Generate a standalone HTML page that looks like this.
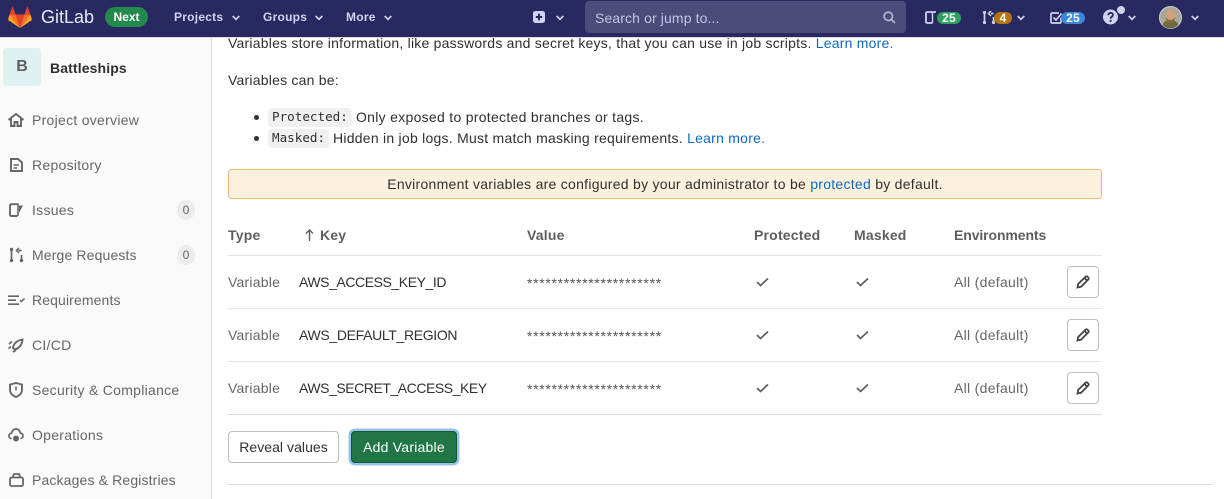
<!DOCTYPE html>
<html><head><meta charset="utf-8">
<style>
*{box-sizing:border-box}
html,body{margin:0;padding:0;width:1224px;height:499px;overflow:hidden;background:#fff;font-family:"Liberation Sans",sans-serif;color:#303030}
.a{position:absolute;white-space:nowrap}
#nav{left:0;top:0;width:1224px;height:37px;background:#292961}
#side{left:0;top:37px;width:212px;height:462px;background:#fafafa;border-right:1px solid #dbdbdb;border-top:1px solid #dbdbdb}
.nl{font-size:12px;font-weight:700;color:#d1d1f0;top:10px;letter-spacing:.25px}
.si{font-size:14px;color:#666;left:32px;letter-spacing:.28px;line-height:18px}
.t{font-size:14px;line-height:18px;letter-spacing:.22px}
.g{color:#666}
.h{font-size:14px;font-weight:700;color:#5e5e5e;letter-spacing:.2px;top:226px;line-height:18px}
.hr{left:228px;width:874px;height:1px;background:#e5e5e5}
.code{font-family:"DejaVu Sans Mono","Liberation Mono",monospace;font-size:12.6px;background:#f0f0f0;border-radius:4px;padding:0 4px;color:#303030;height:19px;line-height:18px}
.b{color:#1068bf}
.edit{left:1067px;width:32px;height:32px;border:1px solid #bfbfbf;border-radius:4px;background:#fff}
.pill{height:12px;border-radius:6px;color:#fff;font-size:12px;font-weight:700;text-align:center;line-height:12px;top:12px;letter-spacing:.2px}
.cnt{left:177px;width:18px;height:20px;border-radius:10px;background:#ececec;color:#666;font-size:12px;line-height:20px;text-align:center}
.st{left:527px;font-size:14px;line-height:18px;letter-spacing:.68px;color:#555}
.k{left:299px;letter-spacing:-.43px}
svg{position:absolute;overflow:visible}
</style></head><body>

<div class="a" id="nav"></div>
<svg style="left:8px;top:7px" width="24" height="22" viewBox="0 0 24 22">
<path d="M12 21 L16.4 7.5 H7.6Z" fill="#e24329"/><path d="M12 21 L7.6 7.5 H1.6Z" fill="#fc6d26"/><path d="M1.6 7.5 L0.2 12 Q0 13 .9 13.6 L12 21Z" fill="#fca326"/><path d="M1.6 7.5H7.6L5 .0Q4.6-.6 4.2 0Z" fill="#e24329"/><path d="M12 21 L16.4 7.5 H22.4Z" fill="#fc6d26"/><path d="M22.4 7.5 L23.8 12 Q24 13 23.1 13.6 L12 21Z" fill="#fca326"/><path d="M22.4 7.5H16.4L19 .0Q19.4-.6 19.8 0Z" fill="#e24329"/>
</svg>
<div class="a" style="left:41px;top:5px;font-size:18px;line-height:24px;color:#e8e8f4">GitLab</div>
<div class="a" style="left:105px;top:7px;width:43px;height:20px;border-radius:10px;background:#218a4c;color:#fff;font-size:12px;font-weight:700;text-align:center;line-height:20px">Next</div>
<div class="a nl" style="left:174px">Projects</div>
<div class="a nl" style="left:263px">Groups</div>
<div class="a nl" style="left:346px">More</div>
<svg style="left:232px;top:15px" width="8" height="6"><path d="M.7 1 4 4.3 7.3 1" fill="none" stroke="#d1d1f0" stroke-width="1.7"/></svg>
<svg style="left:315px;top:15px" width="8" height="6"><path d="M.7 1 4 4.3 7.3 1" fill="none" stroke="#d1d1f0" stroke-width="1.7"/></svg>
<svg style="left:384px;top:15px" width="8" height="6"><path d="M.7 1 4 4.3 7.3 1" fill="none" stroke="#d1d1f0" stroke-width="1.7"/></svg>
<svg style="left:533px;top:11px" width="12" height="12"><rect width="12" height="12" rx="2.5" fill="#d1d1f0"/><path d="M6 2.8V9.2M2.8 6H9.2" stroke="#292961" stroke-width="2"/></svg>
<svg style="left:556px;top:15px" width="8" height="6"><path d="M.7 1 4 4.3 7.3 1" fill="none" stroke="#d1d1f0" stroke-width="1.7"/></svg>
<div class="a" style="left:585px;top:1px;width:321px;height:32px;background:#4b4b7c;border-radius:4px"></div>
<div class="a" style="left:595px;top:9px;font-size:14px;line-height:18px;color:#c4c4de;letter-spacing:.12px">Search or jump to...</div>
<svg style="left:883px;top:11px" width="13" height="13"><circle cx="5.3" cy="5.3" r="4.2" fill="none" stroke="#b5b5d2" stroke-width="1.7"/><path d="M8.5 8.5 12 12" stroke="#b5b5d2" stroke-width="1.8"/></svg>

<svg style="left:925px;top:11px" width="13" height="13"><path d="M11 1H2.5Q1 1 1 2.5V10.5Q1 12 2.5 12H7.5" fill="none" stroke="#d1d1f0" stroke-width="1.8"/><path d="M7.5 1V12" stroke="#d1d1f0" stroke-width="1.4"/></svg>
<div class="a pill" style="left:937px;width:24px;background:#2da160">25</div>
<svg style="left:982px;top:10px" width="14" height="15"><path d="M2.5 3V12M11.5 7V12M11.5 3.5H9" fill="none" stroke="#d1d1f0" stroke-width="1.7"/><circle cx="2.5" cy="2.5" r="1.6" fill="#d1d1f0"/><circle cx="2.5" cy="12.5" r="1.6" fill="#d1d1f0"/><circle cx="11.5" cy="12.5" r="1.6" fill="#d1d1f0"/><path d="M9 1 6.5 3.5 9 6" fill="none" stroke="#d1d1f0" stroke-width="1.5"/></svg>
<div class="a pill" style="left:994px;width:18px;background:#b5720d">4</div>
<svg style="left:1017px;top:15px" width="8" height="6"><path d="M.7 1 4 4.3 7.3 1" fill="none" stroke="#d1d1f0" stroke-width="1.7"/></svg>
<svg style="left:1050px;top:11px" width="14" height="14"><path d="M11 6.5V11Q11 12 10 12H2Q1 12 1 11V3Q1 2 2 2H9" fill="none" stroke="#d1d1f0" stroke-width="1.7"/><path d="M3.5 6.5 6 9 11.5 2.5" fill="none" stroke="#d1d1f0" stroke-width="1.7"/></svg>
<div class="a pill" style="left:1061px;width:24px;background:#3a87d9">25</div>
<svg style="left:1103px;top:9px" width="16" height="16"><circle cx="7.5" cy="8" r="7.5" fill="#d1d1f0"/><path d="M5.2 6.2Q5.5 3.9 7.7 3.9 10 4 9.9 6 9.8 7.2 8.6 7.8 7.6 8.4 7.6 9.6" fill="none" stroke="#292961" stroke-width="1.8"/><circle cx="7.6" cy="11.9" r="1.1" fill="#292961"/></svg>
<div class="a" style="left:1117px;top:6px;width:8px;height:8px;border-radius:50%;background:#d1d1f0;box-shadow:0 0 0 1px #292961"></div>
<svg style="left:1128px;top:15px" width="8" height="6"><path d="M.7 1 4 4.3 7.3 1" fill="none" stroke="#d1d1f0" stroke-width="1.7"/></svg>
<svg style="left:1159px;top:6px" width="23" height="23" viewBox="0 0 23 23"><circle cx="11.5" cy="11.5" r="11" fill="#a8a898" stroke="#cfcfd8" stroke-width="1"/><ellipse cx="11.5" cy="9.5" rx="5" ry="6" fill="#d2a07a"/><path d="M6.5 11Q11.5 17 16.5 11 16 16 11.5 16.5 7 16 6.5 11Z" fill="#8a6b48"/><path d="M3.6 19Q5 15 8 15 11.5 18 15 15 18 15 19.4 19 15 22.5 11.5 22.5 7 22.5 3.6 19Z" fill="#6f6a3c"/></svg>
<svg style="left:1191px;top:15px" width="8" height="6"><path d="M.7 1 4 4.3 7.3 1" fill="none" stroke="#d1d1f0" stroke-width="1.7"/></svg>

<div class="a" id="side"></div>
<div class="a" style="left:3px;top:48px;width:38px;height:38px;border-radius:4px;background:#e0f1f2;color:#5e5e5e;font-size:16px;font-weight:700;text-align:center;line-height:38px">B</div>
<div class="a" style="left:50px;top:59px;font-size:14px;font-weight:700;line-height:18px;color:#303030;letter-spacing:.12px">Battleships</div>

<svg style="left:8px;top:113px" width="16" height="14" fill="none" stroke="#666" stroke-width="1.9"><path d="M.5 7 8 1 15.5 7"/><path d="M3 5.5V13H6.5V9H9.5V13H13V5.5"/></svg>
<div class="a si" style="top:111px">Project overview</div>
<svg style="left:10px;top:158px" width="13" height="14" fill="none" stroke="#666" stroke-width="1.9"><path d="M1 1H8L12 4.5V13H1Z"/><path d="M3.5 7H9M3.5 10H7" stroke-width="1.4"/></svg>
<div class="a si" style="top:156px">Repository</div>
<svg style="left:9px;top:203px" width="15" height="14"><path d="M9.5 1.2H2.5Q1 1.2 1 2.7V11.5Q1 13 2.5 13H8.5" fill="none" stroke="#666" stroke-width="1.9"/><path d="M9 1V13" stroke="#666" stroke-width="1.6"/><path d="M10 2.5H14L10 10Z" fill="#666"/></svg>
<div class="a si" style="top:201px">Issues</div>
<div class="a cnt" style="top:200px">0</div>
<svg style="left:9px;top:247px" width="15" height="16"><path d="M2.5 3V13M12.5 8V13M12.5 3.5H9.5" fill="none" stroke="#666" stroke-width="1.7"/><circle cx="2.5" cy="2.5" r="1.7" fill="#666"/><circle cx="2.5" cy="13.5" r="1.7" fill="#666"/><circle cx="12.5" cy="13.5" r="1.7" fill="#666"/><path d="M10 1 7.5 3.5 10 6" fill="none" stroke="#666" stroke-width="1.5"/></svg>
<div class="a si" style="top:246px;letter-spacing:.14px">Merge Requests</div>
<div class="a cnt" style="top:245px">0</div>
<svg style="left:8px;top:295px" width="17" height="11" fill="none" stroke="#666"><path d="M0 1.2H11M0 5.2H8M0 9.2H11" stroke-width="1.7"/><path d="M12 5 13.5 6.6 16.5 3.4" stroke-width="1.4"/></svg>
<div class="a si" style="top:291px;letter-spacing:.12px">Requirements</div>
<svg style="left:8px;top:338px" width="16" height="15" fill="none" stroke="#666"><path d="M5 10Q6 3 14.5 1.5 14 9 7 11.5Z" stroke-width="1.9"/><path d="M1 6 4 3.5M.5 10.5 3 8.5M5 14 8 12" stroke-width="1.7"/></svg>
<div class="a si" style="top:336px">CI/CD</div>
<svg style="left:9px;top:382px" width="14" height="16" fill="none" stroke="#666" stroke-width="1.9"><path d="M7 1 13 2.6V8Q13 12.5 7 15 1 12.5 1 8V2.6Z"/><path d="M7 4.5V8.5" stroke-width="1.6"/></svg>
<div class="a si" style="top:381px">Security &amp; Compliance</div>
<svg style="left:8px;top:428px" width="16" height="15" fill="none" stroke="#666" stroke-width="1.7"><path d="M3.5 10.5H3Q.8 10 1 7.5 1.2 5.5 3.5 5.2 4.5 1 8 1 11.5 1 12.5 5.2 15 5.5 15 8 15 10 12.5 10.5"/><circle cx="8" cy="10.5" r="2.4" fill="#666" stroke-width="1.2"/></svg>
<div class="a si" style="top:426px">Operations</div>
<svg style="left:9px;top:473px" width="15" height="14" fill="none" stroke="#666" stroke-width="1.8"><rect x="1" y="4.5" width="13" height="8.5" rx="1.5"/><path d="M3.5 4.5 5 1H10L11.5 4.5"/></svg>
<div class="a si" style="top:471px;letter-spacing:.14px">Packages &amp; Registries</div>

<div class="a t" style="left:228px;top:34px">Variables store information, like passwords and secret keys, that you can use in job scripts. <span class="b">Learn more.</span></div>
<div class="a" style="left:212px;top:37px;width:1012px;height:1px;background:#dbdbdb"></div>
<div class="a t" style="left:228px;top:71px">Variables can be:</div>
<div class="a" style="left:254px;top:115px;width:5px;height:5px;border-radius:50%;background:#303030"></div>
<div class="a" style="left:254px;top:136px;width:5px;height:5px;border-radius:50%;background:#303030"></div>
<div class="a code" style="left:268px;top:108px">Protected:</div>
<div class="a t" style="left:356px;top:108px;letter-spacing:.29px">Only exposed to protected branches or tags.</div>
<div class="a code" style="left:268px;top:129px">Masked:</div>
<div class="a t" style="left:333px;top:129px;letter-spacing:.25px">Hidden in job logs. Must match masking requirements. <span class="b">Learn more.</span></div>

<div class="a t" style="left:228px;top:169px;width:874px;height:30px;background:#fdf1dd;border:1px solid #e9be74;border-radius:3px;text-align:center;line-height:28px;letter-spacing:.27px">Environment variables are configured by your administrator to be <span class="b">protected</span> by default.</div>

<div class="a h" style="left:228px">Type</div>
<svg style="left:305px;top:229px" width="9" height="12" fill="none" stroke="#5e5e5e" stroke-width="1.4"><path d="M4.5 12V1M1 4.5 4.5 1 8 4.5"/></svg>
<div class="a h" style="left:320px">Key</div>
<div class="a h" style="left:527px">Value</div>
<div class="a h" style="left:754px">Protected</div>
<div class="a h" style="left:854px">Masked</div>
<div class="a h" style="left:954px;letter-spacing:-.1px">Environments</div>
<div class="a hr" style="top:255px"></div>
<div class="a hr" style="top:308px"></div>
<div class="a hr" style="top:361px"></div>
<div class="a hr" style="top:414px;background:#dbdbdb"></div>
<div class="a hr" style="top:484px;left:228px;width:984px;background:#dbdbdb"></div>

<div class="a t g" style="left:228px;top:273px">Variable</div>
<div class="a t k" style="top:273px">AWS_ACCESS_KEY_ID</div>
<div class="a st" style="top:274px">**********************</div>
<svg style="left:756px;top:277px" width="13" height="10" fill="none" stroke="#5e5e5e" stroke-width="1.7"><path d="M1 5 4.5 8.5 12 1.5"/></svg>
<svg style="left:856px;top:277px" width="13" height="10" fill="none" stroke="#5e5e5e" stroke-width="1.7"><path d="M1 5 4.5 8.5 12 1.5"/></svg>
<div class="a t g" style="left:954px;top:273px;letter-spacing:.3px">All (default)</div>
<div class="a edit" style="top:266px"></div>
<svg style="left:1076px;top:275px" width="14" height="14" fill="none" stroke="#444" stroke-width="1.8"><path d="M1.5 12.5 2.2 9 9.8 1.5Q10.5 1 11.2 1.5L12.5 2.8Q13 3.5 12.5 4.2L5 11.8Z"/><path d="M8.5 3 11 5.5"/></svg>

<div class="a t g" style="left:228px;top:326px">Variable</div>
<div class="a t k" style="top:326px;letter-spacing:-.33px">AWS_DEFAULT_REGION</div>
<div class="a st" style="top:327px">**********************</div>
<svg style="left:756px;top:330px" width="13" height="10" fill="none" stroke="#5e5e5e" stroke-width="1.7"><path d="M1 5 4.5 8.5 12 1.5"/></svg>
<svg style="left:856px;top:330px" width="13" height="10" fill="none" stroke="#5e5e5e" stroke-width="1.7"><path d="M1 5 4.5 8.5 12 1.5"/></svg>
<div class="a t g" style="left:954px;top:326px;letter-spacing:.3px">All (default)</div>
<div class="a edit" style="top:319px"></div>
<svg style="left:1076px;top:328px" width="14" height="14" fill="none" stroke="#444" stroke-width="1.8"><path d="M1.5 12.5 2.2 9 9.8 1.5Q10.5 1 11.2 1.5L12.5 2.8Q13 3.5 12.5 4.2L5 11.8Z"/><path d="M8.5 3 11 5.5"/></svg>

<div class="a t g" style="left:228px;top:379px">Variable</div>
<div class="a t k" style="top:379px;letter-spacing:-.45px">AWS_SECRET_ACCESS_KEY</div>
<div class="a st" style="top:380px">**********************</div>
<svg style="left:756px;top:383px" width="13" height="10" fill="none" stroke="#5e5e5e" stroke-width="1.7"><path d="M1 5 4.5 8.5 12 1.5"/></svg>
<svg style="left:856px;top:383px" width="13" height="10" fill="none" stroke="#5e5e5e" stroke-width="1.7"><path d="M1 5 4.5 8.5 12 1.5"/></svg>
<div class="a t g" style="left:954px;top:379px;letter-spacing:.3px">All (default)</div>
<div class="a edit" style="top:372px"></div>
<svg style="left:1076px;top:381px" width="14" height="14" fill="none" stroke="#444" stroke-width="1.8"><path d="M1.5 12.5 2.2 9 9.8 1.5Q10.5 1 11.2 1.5L12.5 2.8Q13 3.5 12.5 4.2L5 11.8Z"/><path d="M8.5 3 11 5.5"/></svg>

<div class="a t" style="left:228px;top:431px;width:111px;height:32px;border:1px solid #bfbfbf;border-radius:4px;background:#fff;text-align:center;line-height:30px;letter-spacing:.05px">Reveal values</div>
<div class="a t" style="left:351px;top:431px;width:106px;height:32px;border:1px solid #0f5a32;border-radius:4px;background:#217645;color:#fff;text-align:center;line-height:30px;box-shadow:0 0 0 2.5px #97c3ea">Add Variable</div>
</body></html>
